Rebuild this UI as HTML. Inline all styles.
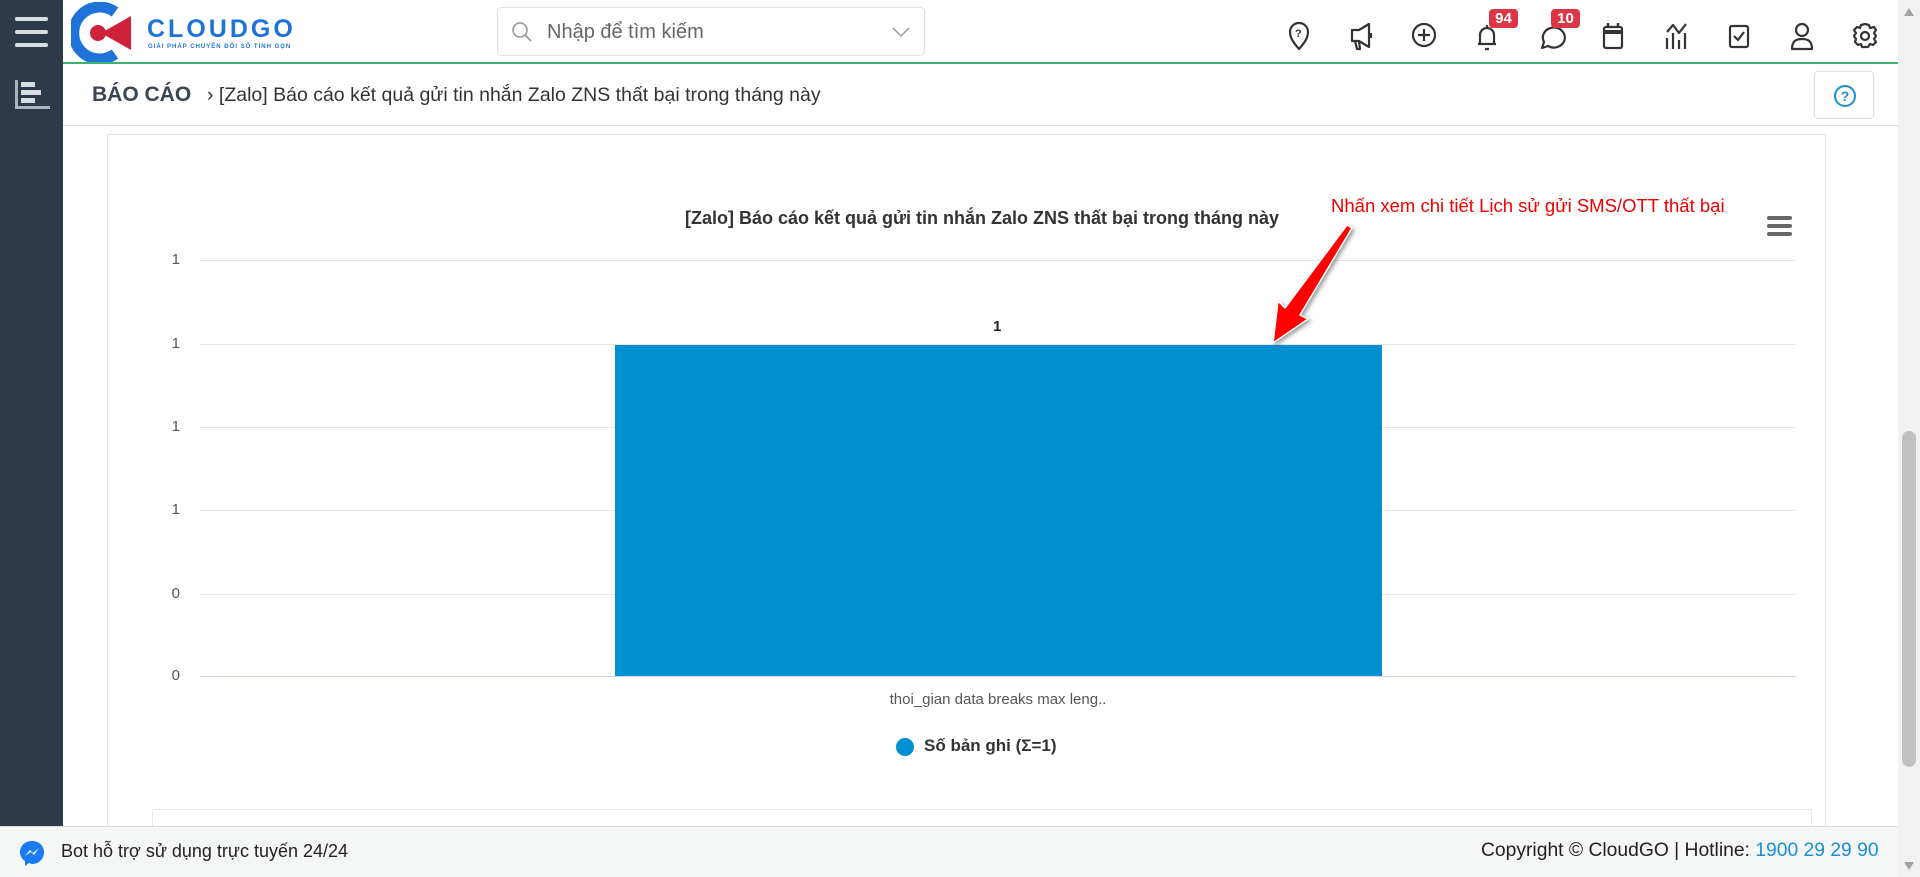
<!DOCTYPE html>
<html><head><meta charset="utf-8">
<style>
*{margin:0;padding:0;box-sizing:border-box}
body{width:1920px;height:877px;overflow:hidden;background:#fff;font-family:"Liberation Sans","DejaVu Sans",sans-serif;position:relative}
.side{position:absolute;left:0;top:0;width:63px;height:877px;background:#2c3a4a}
.abs{position:absolute}
.hdr{position:absolute;left:63px;top:0;width:1835px;height:64px;background:#fff;border-bottom:2px solid #3cb371}
.bc{position:absolute;left:63px;top:64px;width:1835px;height:62px;background:#fff;border-bottom:1px solid #ddd}
.main{position:absolute;left:63px;top:126px;width:1835px;height:702px;background:#fff}
.card{position:absolute;left:107px;top:134px;width:1719px;height:720px;border:1px solid #e2e2e2;background:#fff}
.grid{position:absolute;left:200px;width:1596px;height:1px;background:#e6e6e6}
.yl{position:absolute;left:160px;width:20px;text-align:right;font-size:15px;color:#555}
.badge{position:absolute;background:#dc3545;color:#fff;font-size:15px;font-weight:bold;border-radius:4px;height:19px;width:29px;text-align:center;line-height:19px}
.foot{position:absolute;left:0;top:826px;width:1898px;height:51px;background:#f5f6f6;border-top:1px solid #ddd}
.sb{position:absolute;left:1898px;top:0;width:22px;height:877px;background:#f1f1f1}
</style></head><body>
<div class="side">
  <div class="abs" style="left:15px;top:17px;width:33px;height:4px;background:#d8dde3;border-radius:2px"></div>
  <div class="abs" style="left:15px;top:30px;width:33px;height:4px;background:#d8dde3;border-radius:2px"></div>
  <div class="abs" style="left:15px;top:43px;width:33px;height:4px;background:#d8dde3;border-radius:2px"></div>
  <div class="abs" style="left:15px;top:80px;width:3px;height:28px;background:#aab4be"></div>
  <div class="abs" style="left:15px;top:106px;width:35px;height:3px;background:#aab4be"></div>
  <div class="abs" style="left:21px;top:82px;width:14px;height:5px;background:#d8dde3"></div>
  <div class="abs" style="left:21px;top:90px;width:20px;height:5px;background:#d8dde3"></div>
  <div class="abs" style="left:21px;top:98px;width:14px;height:5px;background:#d8dde3"></div>
</div>
<div class="hdr">
  <svg class="abs" style="left:8px;top:2px" width="64" height="60" viewBox="0 0 64 60">
    <path d="M44 10 A26 26 0 1 0 44 52" fill="none" stroke="#1e73d8" stroke-width="11"/>
    <path d="M30 31 L60 14 L60 48 Z" fill="#d0213a"/>
    <circle cx="27" cy="31" r="8" fill="#d0213a"/>
  </svg>
  <div class="abs" style="left:84px;top:15px;font-size:25px;font-weight:bold;color:#1e73d8;letter-spacing:3px">CLOUDGO</div>
  <div class="abs" style="left:85px;top:44px;font-size:6px;font-weight:bold;color:#1e73d8;letter-spacing:1px">GIẢI PHÁP CHUYỂN ĐỔI SỐ TINH GỌN</div>
  <div class="abs" style="left:434px;top:7px;width:428px;height:49px;border:1px solid #ddd;border-radius:5px">
    <svg class="abs" style="left:13px;top:13px" width="22" height="22" viewBox="0 0 22 22"><circle cx="9" cy="9" r="7" fill="none" stroke="#999" stroke-width="1.6"/><line x1="14" y1="14" x2="20" y2="20" stroke="#999" stroke-width="1.8"/></svg>
    <div class="abs" style="left:49px;top:13px;font-size:20px;color:#666">Nhập để tìm kiếm</div>
    <svg class="abs" style="left:393px;top:17px" width="20" height="14" viewBox="0 0 20 14"><path d="M2 3 L10 11 L18 3" fill="none" stroke="#999" stroke-width="1.5"/></svg>
  </div>
</div>
<svg class="abs" style="left:1280px;top:20px" width="610" height="32" viewBox="0 0 610 32">
  <g fill="none" stroke="#333" stroke-width="2.2" stroke-linejoin="round">
    <g transform="translate(7,0)"><path d="M12 29 C4 20 3 16 3 12 A9 9 0 0 1 21 12 C21 16 20 20 12 29Z"/><text x="8" y="17" font-size="11" fill="#333" stroke="none" font-weight="bold">?</text></g>
    <g transform="translate(69,0)"><path d="M3 10 L10 10 L20 4 L20 27 L10 21 L3 21 Z M6 21 L8 29 L11 29 L10 21" fill="none"/><path d="M22 13 V18"/></g>
    <g transform="translate(132,0)"><circle cx="12" cy="15" r="11"/><path d="M12 9 V21 M6 15 H18"/></g>
    <g transform="translate(195,0)"><path d="M3 24 H21 M5 24 V15 A7 7 0 0 1 19 15 V24 M12 5 V7 M10 29 H14"/></g>
    <g transform="translate(259,0)"><path d="M3 28 L5 22 A11 10 0 1 1 9 26 Z"/></g>
    <g transform="translate(321,0)"><rect x="3" y="7" width="18" height="21" rx="2"/><path d="M3 12 H21" stroke-width="4"/><path d="M7 3 V8 M17 3 V8" stroke-width="2.5"/></g>
    <g transform="translate(384,0)"><path d="M3 29 V18 M9 29 V13 M15 29 V20 M21 29 V13 M3 12 L9 5 L15 13 L22 4"/></g>
    <g transform="translate(447,0)"><rect x="3" y="6" width="18" height="21" rx="2"/><path d="M7 16 L11 20 L17 12"/></g>
    <g transform="translate(510,0)"><circle cx="12" cy="10" r="6"/><path d="M2 29 C2 21 6 19 12 19 C18 19 22 21 22 29 Z"/></g>
    <g transform="translate(573,0)"><circle cx="12" cy="16" r="4"/><path d="M12 4 L16 5 L17 8 L21 7 L23 10 L21 13 L23 16 L21 19 L23 22 L20 25 L17 24 L15 27 L9 27 L8 24 L5 25 L2 22 L3 19 L1 16 L3 13 L1 10 L4 7 L7 8 L8 5 Z"/></g>
  </g>
</svg>
<div class="badge" style="left:1489px;top:9px">94</div>
<div class="badge" style="left:1551px;top:9px">10</div>
<div class="bc">
  <div class="abs" style="left:29px;top:19px;font-size:21px;color:#3b4654;font-weight:bold">BÁO CÁO</div>
  <div class="abs" style="left:144px;top:20px;font-size:19.5px;color:#333">› [Zalo] Báo cáo kết quả gửi tin nhắn Zalo ZNS thất bại trong tháng này</div>
  <div class="abs" style="left:1751px;top:7px;width:60px;height:48px;border:1px solid #ddd;border-radius:4px">
    <div class="abs" style="left:19px;top:13px;width:22px;height:22px;border:2px solid #1a8fd8;border-radius:50%;color:#1a8fd8;font-size:14px;font-weight:bold;text-align:center;line-height:18px">?</div>
  </div>
</div>
<div class="main"></div>
<div class="card"></div>
<div class="abs" style="left:0;top:208px;width:1964px;text-align:center;font-size:18px;font-weight:bold;color:#333">[Zalo] Báo cáo kết quả gửi tin nhắn Zalo ZNS thất bại trong tháng này</div>
<div class="abs" style="left:1331px;top:195px;font-size:18.5px;color:#e00">Nhấn xem chi tiết Lịch sử gửi SMS/OTT thất bại</div>
<div class="abs" style="left:1767px;top:216px;width:25px;height:4px;background:#666;border-radius:2px"></div>
<div class="abs" style="left:1767px;top:224px;width:25px;height:4px;background:#666;border-radius:2px"></div>
<div class="abs" style="left:1767px;top:232px;width:25px;height:4px;background:#666;border-radius:2px"></div>
<div class="grid" style="top:260px"></div>
<div class="grid" style="top:344px"></div>
<div class="grid" style="top:427px"></div>
<div class="grid" style="top:510px"></div>
<div class="grid" style="top:594px"></div>
<div class="grid" style="top:676px;background:#ccd6eb"></div>
<div class="yl" style="top:251px">1</div>
<div class="yl" style="top:335px">1</div>
<div class="yl" style="top:418px">1</div>
<div class="yl" style="top:501px">1</div>
<div class="yl" style="top:585px">0</div>
<div class="yl" style="top:667px">0</div>
<div class="abs" style="left:615px;top:345px;width:767px;height:331px;background:#008fd1"></div>
<div class="abs" style="left:993px;top:318px;font-size:15px;font-weight:bold;color:#222">1</div>
<div class="abs" style="left:0;top:691px;width:1996px;text-align:center;font-size:15px;color:#555">thoi_gian data breaks max leng..</div>
<div class="abs" style="left:896px;top:738px;width:18px;height:18px;border-radius:50%;background:#008fd1"></div>
<div class="abs" style="left:924px;top:736px;font-size:17px;font-weight:bold;color:#333">Số bản ghi (Σ=1)</div>
<svg class="abs" style="left:1260px;top:215px" width="100" height="135" viewBox="0 0 100 135">
  <path d="M87 10 L92 13 L40 100 L48 104 L13 128 L18 86 L25 93 Z" fill="#f00" stroke="#fff" stroke-width="1.5" style="filter:drop-shadow(2px 2px 2px rgba(0,0,0,.4))"/>
</svg>
<div class="abs" style="left:152px;top:809px;width:1660px;height:20px;border:1px solid #e8e8e8;border-bottom:none"></div>
<div class="foot">
  <svg class="abs" style="left:18px;top:12px" width="28" height="28" viewBox="0 0 28 28"><path d="M14 2 C7 2 2 7 2 13 C2 17 4 20 7 22 V27 L11 24 C12 24 13 25 14 25 C21 25 26 20 26 13 C26 7 21 2 14 2Z" fill="#1a7cf5"/><path d="M7 17 L12 11 L15 14 L21 9 L16 16 L13 13 Z" fill="#fff"/></svg>
  <div class="abs" style="left:61px;top:14px;font-size:18px;color:#222">Bot hỗ trợ sử dụng trực tuyến 24/24</div>
  <div class="abs" style="left:1481px;top:13px;font-size:19.3px;color:#222">Copyright © CloudGO | Hotline: <span style="color:#1a8fd8">1900 29 29 90</span></div>
</div>
<div class="sb">
  <div class="abs" style="left:4px;top:431px;width:14px;height:336px;background:#c1c1c1;border-radius:7px"></div>
  <div class="abs" style="left:6px;top:8px;width:0;height:0;border-left:5px solid transparent;border-right:5px solid transparent;border-bottom:8px solid #a3a3a3"></div>
  <div class="abs" style="left:6px;top:862px;width:0;height:0;border-left:5px solid transparent;border-right:5px solid transparent;border-top:8px solid #a3a3a3"></div>
</div>
</body></html>
